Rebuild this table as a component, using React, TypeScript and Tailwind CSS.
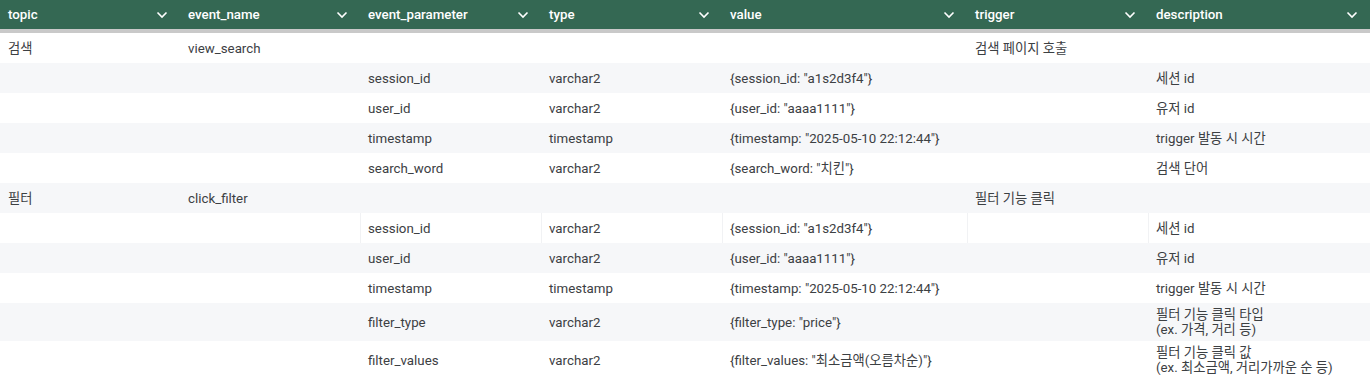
const columns = [
  "topic",
  "event_name",
  "event_parameter",
  "type",
  "value",
  "trigger",
  "description",
];

type Row = {
  cells: string[];
  tall?: boolean;
  lined?: boolean;
};

const rows: Row[] = [
  { cells: ["검색", "view_search", "", "", "", "검색 페이지 호출", ""] },
  { cells: ["", "", "session_id", "varchar2", '{session_id: "a1s2d3f4"}', "", "세션 id"] },
  { cells: ["", "", "user_id", "varchar2", '{user_id: "aaaa1111"}', "", "유저 id"] },
  { cells: ["", "", "timestamp", "timestamp", '{timestamp: "2025-05-10 22:12:44"}', "", "trigger 발동 시 시간"] },
  { cells: ["", "", "search_word", "varchar2", '{search_word: "치킨"}', "", "검색 단어"] },
  { cells: ["필터", "click_filter", "", "", "", "필터 기능 클릭", ""] },
  { cells: ["", "", "session_id", "varchar2", '{session_id: "a1s2d3f4"}', "", "세션 id"], lined: true },
  { cells: ["", "", "user_id", "varchar2", '{user_id: "aaaa1111"}', "", "유저 id"] },
  { cells: ["", "", "timestamp", "timestamp", '{timestamp: "2025-05-10 22:12:44"}', "", "trigger 발동 시 시간"] },
  {
    cells: ["", "", "filter_type", "varchar2", '{filter_type: "price"}', "", "필터 기능 클릭 타입\n(ex. 가격, 거리 등)"],
    tall: true,
  },
  {
    cells: ["", "", "filter_values", "varchar2", '{filter_values: "최소금액(오름차순)"}', "", "필터 기능 클릭 값\n(ex. 최소금액, 거리가까운 순 등)"],
    tall: true,
  },
];

function Chevron() {
  return (
    <svg width="12" height="8" viewBox="0 0 12 8" className="shrink-0">
      <polyline
        points="1.5,1.5 6,6 10.5,1.5"
        fill="none"
        stroke="white"
        strokeWidth="1.6"
      />
    </svg>
  );
}

export default function App() {
  const grid =
    "grid grid-cols-[180px_180px_181px_181px_245px_181px_1fr]";

  return (
    <div
      className="min-h-screen bg-white text-[13.3px] text-[#3c4043]"
      style={{ fontFamily: "Roboto, 'Noto Sans CJK KR', sans-serif" }}
    >
      <div className={`${grid} h-[29px] bg-[#346853]`}>
        {columns.map((c) => (
          <div
            key={c}
            className="flex items-center justify-between pl-2 pr-3 font-medium text-white"
          >
            <span>{c}</span>
            <Chevron />
          </div>
        ))}
      </div>
      <div className="h-[4px] bg-[#c9c9c9]" />

      {rows.map((row, i) => (
        <div
          key={i}
          className={`${grid} ${row.tall ? "min-h-[38px] py-1" : "h-[30px]"} ${
            i % 2 === 1 ? "bg-[#f6f7f9]" : "bg-white"
          }`}
        >
          {row.cells.map((cell, j) => (
            <div
              key={j}
              className={`flex items-center whitespace-pre-line px-2 leading-[15px] ${
                row.lined && j > 1 ? "shadow-[inset_1px_0_0_#f1f2f4]" : ""
              }`}
            >
              {cell}
            </div>
          ))}
        </div>
      ))}
    </div>
  );
}
